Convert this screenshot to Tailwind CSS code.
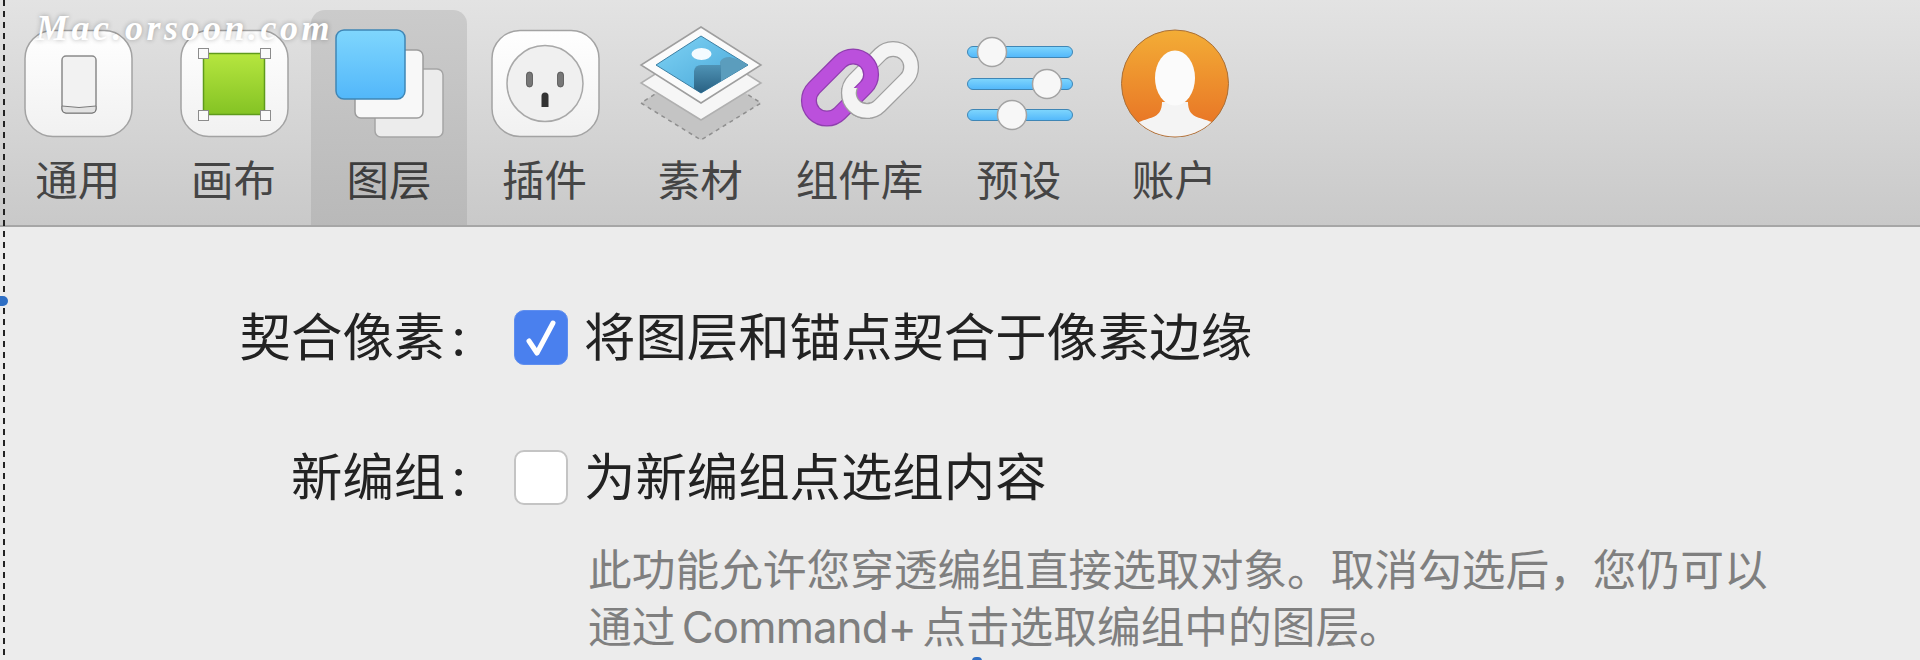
<!DOCTYPE html>
<html lang="zh-CN">

<head>
    <meta charset="UTF-8">
    <meta name="viewport" content="width=device-width, initial-scale=1.0">
    <title>偏好设置</title>
    <script src="https://cdn.jsdelivr.net/npm/@tailwindcss/browser@4"></script>
</head>

<body class="relative h-screen overflow-hidden bg-[#ececec] font-['Inter','Noto_Sans_CJK_SC',sans-serif]">

    <!-- shared svg gradients -->
    <svg width="0" height="0" class="absolute">
        <defs>
            <linearGradient id="tile" x1="0" y1="0" x2="0" y2="1">
                <stop offset="0" stop-color="#ffffff" />
                <stop offset="1" stop-color="#f1f1f1" />
            </linearGradient>
            <linearGradient id="green" x1="0" y1="0" x2="0" y2="1">
                <stop offset="0" stop-color="#b6e63f" />
                <stop offset="1" stop-color="#84c324" />
            </linearGradient>
            <linearGradient id="blue" x1="0" y1="0" x2="0" y2="1">
                <stop offset="0" stop-color="#7fd6fd" />
                <stop offset="1" stop-color="#52b7fa" />
            </linearGradient>
            <linearGradient id="orange" x1="0" y1="0" x2="0" y2="1">
                <stop offset="0" stop-color="#f3ad36" />
                <stop offset="1" stop-color="#e76f24" />
            </linearGradient>
            <linearGradient id="sky" x1="0" y1="0" x2="1" y2="1">
                <stop offset="0" stop-color="#7fd3f5" />
                <stop offset="1" stop-color="#45a4d6" />
            </linearGradient>
            <linearGradient id="hill" x1="0" y1="0" x2="0" y2="1">
                <stop offset="0" stop-color="#4f93b5" />
                <stop offset="1" stop-color="#22587a" />
            </linearGradient>
            <clipPath id="photo">
                <polygon points="78,10 125,39 78,67 33,39" />
            </clipPath>
            <clipPath id="chain-front">
                <rect x="48" y="62" width="44" height="40" />
            </clipPath>
            <clipPath id="avatar">
                <circle cx="78" cy="57.500" r="53" />
            </clipPath>
        </defs>
    </svg>

    <!-- toolbar -->
    <header class="flex h-[227px] items-start border-b-2 border-[#a6a6a6] bg-linear-to-b from-[#e3e3e3] to-[#c9c9c9] pt-[10px]">

        <!-- general -->
        <div class="flex h-[215px] w-[155.6px] flex-col items-center pt-[16px]">
            <svg class="h-[118px] w-[155px] shrink-0" viewBox="0 0 155 118">
                <rect x="25" y="4.500" width="107" height="106" rx="28" fill="url(#tile)" stroke="#a3a3a3" stroke-width="1.5" />
                <rect x="62" y="30" width="34" height="57" rx="4" fill="#f2f2f2" stroke="#8a8a8a" stroke-width="1.5" />
                <path d="M62 80 Q79 83 96 80 V83 a4 4 0 0 1 -4 4 H66 a4 4 0 0 1 -4 -4 Z" fill="#e2e2e2" stroke="#7a7a7a" />
            </svg>
            <span class="mt-[12px] text-[42.5px] leading-[50px] text-[#454545]">通用</span>
        </div>

        <!-- canvas -->
        <div class="flex h-[215px] w-[155.6px] flex-col items-center pt-[16px]">
            <svg class="h-[118px] w-[155px] shrink-0" viewBox="0 0 155 118">
                <rect x="25" y="4.500" width="107" height="106" rx="28" fill="url(#tile)" stroke="#a3a3a3" stroke-width="1.5" />
                <rect x="47.500" y="27.500" width="61" height="61" rx="2" fill="url(#green)" stroke="#5f9a1c" stroke-width="1.5" />
                <g fill="#fafafa" stroke="#8c8c8c">
                    <rect x="42.500" y="22.500" width="10" height="10" />
                    <rect x="104.500" y="22.500" width="10" height="10" />
                    <rect x="42.500" y="84.500" width="10" height="10" />
                    <rect x="104.500" y="84.500" width="10" height="10" />
                </g>
            </svg>
            <span class="mt-[12px] text-[42.5px] leading-[50px] text-[#454545]">画布</span>
        </div>

        <!-- layers, selected -->
        <div class="flex h-[215px] w-[155.6px] flex-col items-center rounded-t-[14px] bg-linear-to-b from-[#cbcbcb] to-[#b9b9b9] pt-[16px]">
            <svg class="h-[118px] w-[155px] shrink-0" viewBox="0 0 155 118">
                <rect x="64" y="43" width="68" height="68" rx="6" fill="#ececec" stroke="#a5a5a5" stroke-width="1.5" />
                <rect x="44" y="24" width="68" height="68" rx="6" fill="#f8f8f8" stroke="#9c9c9c" stroke-width="1.5" />
                <rect x="25" y="4" width="69" height="69" rx="8" fill="url(#blue)" stroke="#3f86b5" stroke-width="1.5" />
            </svg>
            <span class="mt-[12px] text-[42.5px] leading-[50px] text-[#3d3d3d]">图层</span>
        </div>

        <!-- plugins -->
        <div class="flex h-[215px] w-[155.6px] flex-col items-center pt-[16px]">
            <svg class="h-[118px] w-[155px] shrink-0" viewBox="0 0 155 118">
                <rect x="25" y="4.500" width="107" height="106" rx="28" fill="url(#tile)" stroke="#a3a3a3" stroke-width="1.5" />
                <circle cx="78" cy="57.500" r="38" fill="#f0f0f0" stroke="#a8a8a8" stroke-width="1.5" />
                <rect x="59.500" y="46" width="6" height="15" rx="3" fill="#777" stroke="#444" stroke-width="0.7" />
                <rect x="90.500" y="46" width="6" height="15" rx="3" fill="#777" stroke="#444" stroke-width="0.7" />
                <path d="M74.500 81 V70 a3.500 3.500 0 0 1 7 0 V81 Z" fill="#333" />
            </svg>
            <span class="mt-[12px] text-[42.5px] leading-[50px] text-[#454545]">插件</span>
        </div>

        <!-- assets -->
        <div class="flex h-[215px] w-[155.6px] flex-col items-center pt-[16px]">
            <svg class="h-[118px] w-[155px] shrink-0" viewBox="0 0 155 118">
                <polygon points="78,39 138,77 78,114 18,77" fill="#c4c4c4" stroke="#8f8f8f" stroke-width="1.5" stroke-dasharray="4 4" />
                <polygon points="78,19 138,57 78,94 18,57" fill="#f6f6f6" stroke="#b0b0b0" stroke-width="1.5" />
                <polygon points="78,1 138,39 78,77 18,39" fill="#fbfbfb" stroke="#9e9e9e" stroke-width="1.5" />
                <polygon points="78,10 125,39 78,67 33,39" fill="url(#sky)" stroke="#3c7fa3" />
                <g clip-path="url(#photo)">
                    <ellipse cx="78.500" cy="28" rx="10" ry="6" fill="#f4fbff" />
                    <path d="M97 44 V36 Q99 31 107 31 L130 38 L90 72 Z" fill="#5b9dbd" />
                    <path d="M71 72 V45 Q72 39 78 39 H98 V72 Z" fill="url(#hill)" />
                </g>
            </svg>
            <span class="mt-[12px] text-[42.5px] leading-[50px] text-[#454545]">素材</span>
        </div>

        <!-- component library -->
        <div class="flex h-[215px] w-[163px] flex-col items-center pt-[16px]">
            <svg class="h-[118px] w-[163px] shrink-0" viewBox="0 0 163 118">
                <rect x="65.500" y="36" width="73" height="36" rx="18" transform="rotate(-45 102 54)" fill="none" stroke="#a0a0a0" stroke-width="16" />
                <rect x="65.500" y="36" width="73" height="36" rx="18" transform="rotate(-45 102 54)" fill="none" stroke="#f4f4f4" stroke-width="13.500" />
                <rect x="25.500" y="43.500" width="73" height="36" rx="18" transform="rotate(-45 62 61.500)" fill="none" stroke="#8f3fae" stroke-width="16" />
                <rect x="25.500" y="43.500" width="73" height="36" rx="18" transform="rotate(-45 62 61.500)" fill="none" stroke="#bb50dc" stroke-width="13.500" />
                <g clip-path="url(#chain-front)">
                    <rect x="65.500" y="36" width="73" height="36" rx="18" transform="rotate(-45 102 54)" fill="none" stroke="#a0a0a0" stroke-width="16" />
                    <rect x="65.500" y="36" width="73" height="36" rx="18" transform="rotate(-45 102 54)" fill="none" stroke="#f4f4f4" stroke-width="13.500" />
                </g>
            </svg>
            <span class="mt-[12px] text-[42.5px] leading-[50px] text-[#454545]">组件库</span>
        </div>

        <!-- presets -->
        <div class="flex h-[215px] w-[155.6px] flex-col items-center pt-[16px]">
            <svg class="h-[118px] w-[155px] shrink-0" viewBox="0 0 155 118">
                <g fill="url(#blue)" stroke="#3f86b5">
                    <rect x="26.500" y="20.500" width="105" height="11" rx="5.500" />
                    <rect x="26.500" y="52.500" width="105" height="11" rx="5.500" />
                    <rect x="26.500" y="83.500" width="105" height="11" rx="5.500" />
                </g>
                <g fill="#f7f7f7" stroke="#a3a3a3" stroke-width="1.500">
                    <circle cx="51" cy="26" r="14.500" />
                    <circle cx="106" cy="58" r="14.500" />
                    <circle cx="71" cy="89" r="14.500" />
                </g>
            </svg>
            <span class="mt-[12px] text-[42.5px] leading-[50px] text-[#454545]">预设</span>
        </div>

        <!-- account -->
        <div class="flex h-[215px] w-[155.6px] flex-col items-center pt-[16px]">
            <svg class="h-[118px] w-[155px] shrink-0" viewBox="0 0 155 118">
                <circle cx="78" cy="57.500" r="53.500" fill="url(#orange)" stroke="#a8703a" />
                <g clip-path="url(#avatar)">
                    <path d="M28 103 L42 96 C54 91 65 92 65 76 H91 C91 92 102 91 115 96 L129 103 V115 H28 Z" fill="#f4f4f4" />
                </g>
                <ellipse cx="78" cy="52" rx="20" ry="27.500" fill="#fbfbfb" />
            </svg>
            <span class="mt-[12px] text-[42.5px] leading-[50px] text-[#454545]">账户</span>
        </div>

    </header>

    <!-- layer preferences -->
    <main class="pt-[82px]">

        <div class="grid h-[57px] grid-cols-[472px_1fr] items-center">
            <span class="text-right text-[51.4px] leading-[57px] text-[#222]">契合像素<span class="ml-[6px] mr-[6px]">:</span></span>
            <div class="flex items-center pl-[42px]">
                <span class="flex h-[55px] w-[54px] items-center justify-center rounded-[10px] border border-[#5f8eef] bg-[#4a80ee]">
                    <svg class="h-[38px] w-[32px]" viewBox="0 0 32 38">
                        <path d="M4 22 L12 34 L28 4" fill="none" stroke="#fff" stroke-width="5" stroke-linecap="round" stroke-linejoin="round" />
                    </svg>
                </span>
                <span class="ml-[16px] text-[51.4px] leading-[57px] text-[#222]">将图层和锚点契合于像素边缘</span>
            </div>
        </div>

        <div class="mt-[83px] grid h-[57px] grid-cols-[472px_1fr] items-center">
            <span class="text-right text-[51.4px] leading-[57px] text-[#222]">新编组<span class="ml-[6px] mr-[6px]">:</span></span>
            <div class="flex items-center pl-[42px]">
                <span class="h-[55px] w-[54px] rounded-[10px] border-2 border-[#c4c4c4] bg-white"></span>
                <span class="ml-[16px] text-[51.4px] leading-[57px] text-[#222]">为新编组点选组内容</span>
            </div>
        </div>

        <p class="mt-[36px] pl-[588px] text-[43.7px] leading-[57px] text-[#7f7f7f] [word-spacing:-6px]">
            此功能允许您穿透编组直接选取对象。取消勾选后，您仍可以<br>通过 <span class="tracking-[-0.8px]">Command+</span> 点击选取编组中的图层。
        </p>

    </main>

    <!-- overlays: selection guide, handles, watermark -->
    <div class="absolute inset-y-0 left-[3px] w-[2px] bg-[repeating-linear-gradient(to_bottom,#222_0,#222_6px,transparent_6px,transparent_11px)]"></div>
    <div class="absolute left-0 top-[296px] h-[10px] w-[8px] rounded-r-full bg-[#2f6fc4]"></div>
    <div class="absolute left-[972px] top-[657px] h-[8px] w-[10px] rounded-full bg-[#2f6fc4]"></div>
    <div class="absolute left-[36px] top-[5px] font-['Liberation_Serif',serif] text-[36px] leading-[46px] font-bold italic tracking-[3.5px] text-white [text-shadow:0_0_5px_rgba(0,0,0,0.3)]">Mac.orsoon.com</div>

</body>

</html>
